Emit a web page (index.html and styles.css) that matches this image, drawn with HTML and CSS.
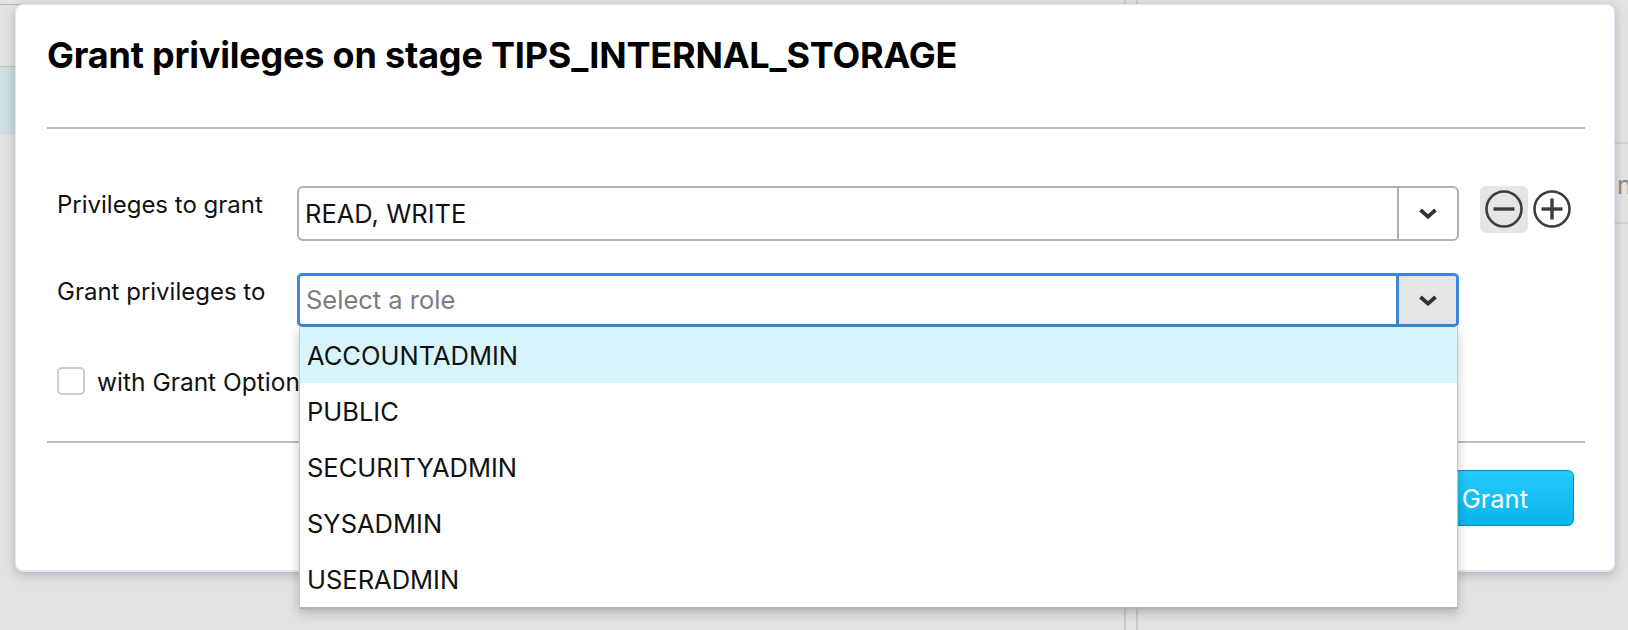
FILE: index.html
```html
<!DOCTYPE html>
<html lang="en">
<head>
<meta charset="utf-8">
<title>Grant privileges</title>
<link rel="stylesheet" href="styles.css">
</head>
<body>
<div class="app">
  <div class="left-panel">
    <div class="topbar"></div>
    <div class="toolbar"></div>
    <div class="selected-row"></div>
  </div>
  <div class="right-panel">
    <div class="right-row"><span class="col-name">name</span></div>
  </div>
</div>

<div class="modal">
  <div class="modal-header">
    <h1 class="modal-title">Grant privileges on stage TIPS_INTERNAL_STORAGE</h1>
  </div>
  <div class="separator"></div>
  <div class="modal-body">
    <div class="form-row">
      <label class="field-label">Privileges to grant</label>
      <div class="select">
        <div class="select-value">READ, WRITE</div>
        <div class="select-arrow">
          <svg width="20" height="11" viewBox="0 0 20 11"><polyline points="2.5,2 10,8.6 17.5,2" fill="none" stroke="#333" stroke-width="3.8" stroke-linecap="butt" stroke-linejoin="miter"/></svg>
        </div>
      </div>
      <div class="row-actions">
        <button class="icon-btn icon-btn-active" aria-label="Remove">
          <svg width="40" height="40" viewBox="0 0 40 40"><circle cx="20" cy="20" r="17.5" fill="none" stroke="#3c3c3c" stroke-width="2.6"/><line x1="9.5" y1="20" x2="30.5" y2="20" stroke="#3c3c3c" stroke-width="3.4"/></svg>
        </button>
        <button class="icon-btn" aria-label="Add">
          <svg width="40" height="40" viewBox="0 0 40 40"><circle cx="20" cy="20" r="17.5" fill="none" stroke="#3c3c3c" stroke-width="2.6"/><line x1="9.5" y1="20" x2="30.5" y2="20" stroke="#3c3c3c" stroke-width="3.4"/><line x1="20" y1="9.5" x2="20" y2="30.5" stroke="#3c3c3c" stroke-width="3.4"/></svg>
        </button>
      </div>
    </div>
    <div class="form-row">
      <label class="field-label">Grant privileges to</label>
      <div class="select select-open">
        <div class="select-value placeholder">Select a role</div>
        <div class="select-arrow">
          <svg width="20" height="11" viewBox="0 0 20 11"><polyline points="2.5,2 10,8.6 17.5,2" fill="none" stroke="#333" stroke-width="3.8" stroke-linecap="butt" stroke-linejoin="miter"/></svg>
        </div>
        <ul class="dropdown">
          <li class="option option-active">ACCOUNTADMIN</li>
          <li class="option">PUBLIC</li>
          <li class="option">SECURITYADMIN</li>
          <li class="option">SYSADMIN</li>
          <li class="option">USERADMIN</li>
        </ul>
      </div>
    </div>
    <div class="check-row">
      <span class="checkbox"></span>
      <span class="check-label">with Grant Option</span>
    </div>
  </div>
  <div class="separator separator-bottom"></div>
  <div class="modal-footer">
    <button class="btn btn-cancel">Cancel</button>
    <button class="btn btn-primary">Grant</button>
  </div>
</div>
</body>
</html>
```

FILE: styles.css
```css
* { box-sizing: border-box; }

html, body {
  margin: 0;
  padding: 0;
}

body {
  width: 1628px;
  height: 630px;
  overflow: hidden;
  background: #e3e3e3;
  font-family: "Inter", "Noto Sans", "Liberation Sans", sans-serif;
  color: #111;
  position: relative;
}

/* background application */
.app {
  display: flex;
  height: 630px;
  gap: 10px;
}

.left-panel {
  flex: none;
  width: 1126px;
  border-right: 2px solid #cbcbcb;
  display: flex;
  flex-direction: column;
}

.topbar {
  height: 5px;
  border-bottom: 1px solid #b8b8b8;
}

.toolbar {
  height: 62px;
  border-bottom: 1px solid #c4c4c4;
}

.selected-row {
  height: 68px;
  background: #cedee2;
}

.right-panel {
  flex: 1;
  min-width: 0;
  border-left: 2px solid #cbcbcb;
  padding-top: 142px;
}

.right-row {
  height: 82px;
  border-top: 2px solid #d2d2d2;
  border-bottom: 2px solid #d2d2d2;
  padding: 26px 0 0 479px;
  font-size: 25px;
  line-height: 30px;
  color: #8a8a8a;
  white-space: nowrap;
  overflow: hidden;
}

/* modal */
.modal {
  position: absolute;
  left: 15px;
  top: 4px;
  width: 1600px;
  height: 568px;
  background: #fff;
  border: 1px solid #dfe7f4;
  border-bottom-width: 2px;
  border-radius: 8px;
  box-shadow: 0 3px 12px rgba(0, 0, 0, 0.22);
  display: flex;
  flex-direction: column;
}

.modal-header {
  padding: 28px 29px 0 31px;
  height: 122px;
}

.modal-title {
  margin: 0;
  font-size: 36px;
  line-height: 44px;
  font-weight: 700;
  color: #000;
  letter-spacing: -0.2px;
}

.separator {
  height: 2px;
  background: #bcbcbc;
  margin: 0 29px 0 31px;
}

.modal-body {
  padding: 57px 0 0 41px;
  height: 312px;
}

.form-row {
  display: flex;
  align-items: flex-start;
  margin-bottom: 32px;
}

.field-label {
  width: 240px;
  flex: none;
  font-size: 24px;
  line-height: 30px;
  padding-top: 4px;
  color: #111;
}

.select {
  position: relative;
  width: 1162px;
  height: 55px;
  border: 2px solid #b0b0b0;
  border-radius: 6px;
  display: flex;
  align-items: center;
  background: #fff;
}

.select-value {
  flex: 1;
  padding-left: 6px;
  font-size: 25.5px;
  line-height: 30px;
  color: #111;
}

.select-value.placeholder {
  color: #7c7c7c;
  padding-left: 6px;
}

.select-arrow {
  width: 60px;
  height: 100%;
  border-left: 2px solid #b0b0b0;
  display: flex;
  align-items: center;
  justify-content: center;
}

.select-open {
  height: 54px;
  border: 3px solid #3f86d6;
  border-radius: 5px;
}

.select-open .select-arrow {
  border-left: 3px solid #3f86d6;
  background: #e6e6e6;
  border-radius: 0 3px 3px 0;
}

.row-actions {
  display: flex;
  margin-left: 21px;
}

.icon-btn {
  width: 48px;
  height: 47px;
  padding: 0;
  border: none;
  background: transparent;
  border-radius: 6px;
  display: flex;
  align-items: center;
  justify-content: center;
}

.icon-btn svg { display: block; margin-top: -1px; }

.icon-btn-active {
  background: #e5e5e5;
}

/* dropdown list */
.dropdown {
  position: absolute;
  left: -1px;
  right: -2px;
  top: calc(100% + 3px);
  margin: 0;
  padding: 0;
  list-style: none;
  background: #fff;
  border: 1px solid #c4c4c4;
  border-top: none;
  border-bottom: 2px solid #b4b4b4;
  box-shadow: 0 4px 10px rgba(0, 0, 0, 0.22);
  z-index: 5;
}

.option {
  height: 56px;
  padding: 1px 0 0 7px;
  font-size: 25.5px;
  line-height: 55px;
  color: #111;
}

.option-active {
  background: #d8f4fb;
}

/* checkbox */
.check-row {
  display: flex;
  align-items: center;
  gap: 12px;
  margin-top: 37px;
}

.checkbox {
  width: 28px;
  height: 28px;
  border: 2px solid #cdcdcd;
  border-radius: 5px;
  background: #fff;
}

.check-label {
  font-size: 24.5px;
  line-height: 30px;
  padding-top: 3px;
  color: #111;
}

/* footer */
.modal-footer {
  display: flex;
  justify-content: flex-end;
  gap: 16px;
  padding: 27px 40px 0 0;
}

.btn {
  height: 56px;
  padding: 0 45px;
  font-family: inherit;
  font-size: 25.5px;
  border-radius: 6px;
}

.btn-cancel {
  background: #f4f4f4;
  border: 1px solid #bdbdbd;
  color: #333;
}

.btn-primary {
  background: linear-gradient(#22cafd, #0cb4ec);
  border: 1.5px solid #0c8fbf;
  color: #fff;
}
```
